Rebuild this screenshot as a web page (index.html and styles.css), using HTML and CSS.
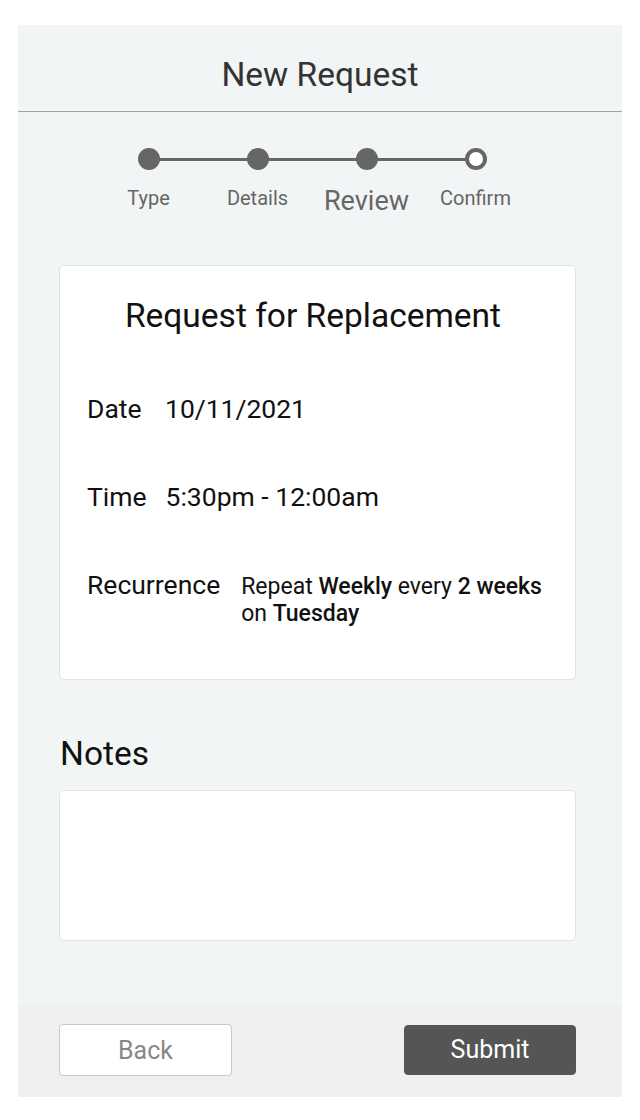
FILE: index.html
```html
<!DOCTYPE html>
<html lang="en">
<head>
    <meta charset="UTF-8">
    <meta name="viewport" content="width=device-width, initial-scale=1.0">
    <title>New Request</title>
    <link rel="stylesheet" href="styles.css">
</head>
<body>
    <div class="app">
        <header>
            <h1>New Request</h1>
        </header>

        <main>
            <ol class="stepper">
                <li class="step done"><span class="dot"></span><span class="name">Type</span></li>
                <li class="step done"><span class="dot"></span><span class="name">Details</span></li>
                <li class="step done current"><span class="dot"></span><span class="name">Review</span></li>
                <li class="step"><span class="dot"></span><span class="name">Confirm</span></li>
            </ol>

            <div class="card">
                <h2>Request for Replacement</h2>
                <div class="row">
                    <span class="label">Date</span>
                    <span class="value">10/11/2021</span>
                </div>
                <div class="row">
                    <span class="label">Time</span>
                    <span class="value">5:30pm - 12:00am</span>
                </div>
                <div class="row">
                    <span class="label">Recurrence</span>
                    <span class="value small">Repeat <b>Weekly</b> every <b>2 weeks</b> on <b>Tuesday</b></span>
                </div>
            </div>

            <h3 class="notes-title">Notes</h3>
            <div class="notes"></div>
        </main>

        <footer>
            <button class="btn back">Back</button>
            <button class="btn submit">Submit</button>
        </footer>
    </div>
</body>
</html>
```

FILE: styles.css
```css
body {
    margin: 0;
    padding: 25px 18px 0;
    background-color: #fff;
    font-family: Roboto, "Noto Sans", sans-serif;
}

.app {
    width: 604px;
    height: 1072px;
    background-color: #f2f5f5;
    display: flex;
    flex-direction: column;
}

header {
    height: 86px;
    border-bottom: 1px solid #a3a3a3;
    display: flex;
    align-items: center;
    justify-content: center;
}

header h1 {
    margin: 0;
    padding-top: 12px;
    font-size: 33.5px;
    font-weight: 400;
    color: #333;
}

main {
    flex: 1;
    padding: 0 46px 0 41px;
}

/* etapas */
.stepper {
    list-style: none;
    margin: 36px 0 0 35px;
    padding: 0;
    display: flex;
}

.step {
    position: relative;
    width: 109px;
    display: flex;
    flex-direction: column;
    align-items: center;
}

.step + .step::before {
    content: "";
    position: absolute;
    top: 10px;
    right: 54px;
    width: 109px;
    height: 3px;
    background-color: #666;
}

.dot {
    position: relative;
    z-index: 1;
    width: 22px;
    height: 22px;
    border-radius: 50%;
    background-color: #666;
    box-sizing: border-box;
}

.step:not(.done) .dot {
    background-color: #fff;
    border: 4px solid #666;
}

.name {
    margin-top: 16px;
    font-size: 20px;
    line-height: 24px;
    color: #666;
}

.current .name {
    margin-top: 15px;
    font-size: 27px;
    line-height: 32px;
}

/* cartão */
.card {
    margin-top: 48px;
    background-color: #fff;
    border: 1px solid #e3e3e3;
    border-radius: 5px;
    padding: 30px 20px 52px 27px;
    display: flex;
    flex-direction: column;
    gap: 57px;
}

.card h2 {
    margin: 0 16px 0 0;
    text-align: center;
    font-size: 33.5px;
    line-height: 40px;
    font-weight: 400;
    color: #111;
}

.row {
    display: flex;
    align-items: baseline;
    font-size: 26.5px;
    line-height: 31px;
    color: #111;
}

.label {
    min-width: 78px;
    padding-right: 19px;
    box-sizing: border-box;
}

.value.small {
    flex: 1;
    margin-left: 2px;
    font-size: 23px;
    line-height: 27px;
}

.value b {
    font-weight: 500;
}

.notes-title {
    margin: 54px 0 16px 1px;
    font-size: 33.5px;
    line-height: 40px;
    font-weight: 400;
    color: #111;
}

.notes {
    height: 149px;
    background-color: #fff;
    border: 1px solid #e3e3e3;
    border-radius: 5px;
}

footer {
    height: 92px;
    background-color: #eef0f0;
    padding: 19px 46px 0 41px;
    box-sizing: border-box;
    display: flex;
    justify-content: space-between;
    align-items: flex-start;
}

.btn {
    width: 173px;
    height: 52px;
    border-radius: 4px;
    font-family: Roboto, "Noto Sans", sans-serif;
    font-size: 25px;
    cursor: pointer;
}

.back {
    background-color: #fff;
    border: 1px solid #c8c8c8;
    color: #888;
}

.submit {
    width: 172px;
    height: 50px;
    margin-top: 1px;
    background-color: #555;
    border: 1px solid #555;
    color: #fff;
    padding-bottom: 3px;
}
```
